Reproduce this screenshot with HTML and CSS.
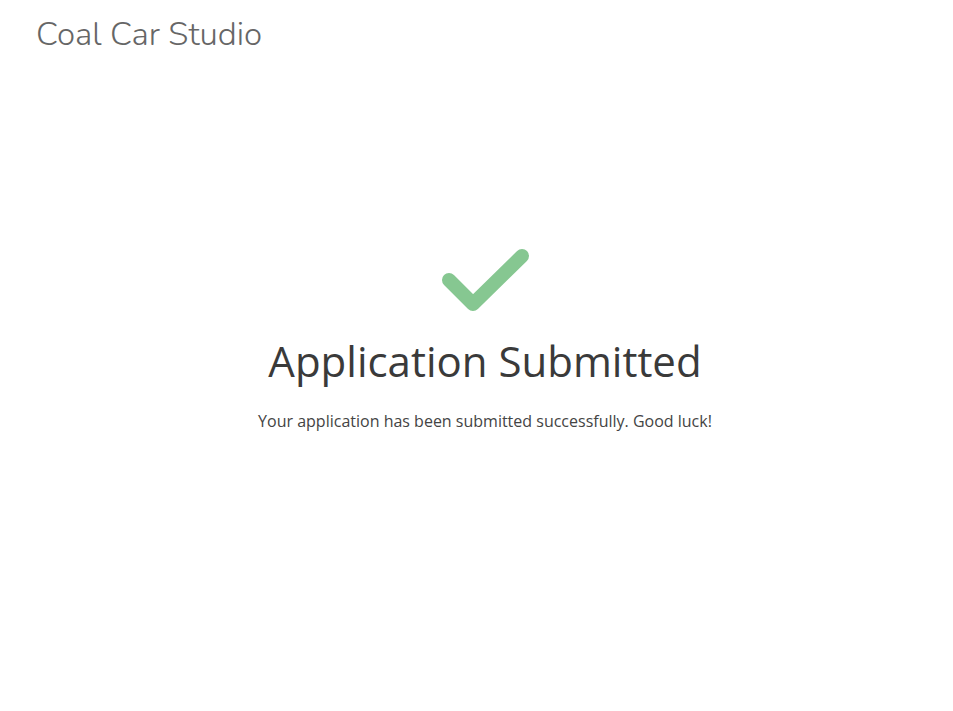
FILE: index.html
```html
<!DOCTYPE html>
<html>
<head>
<meta charset="utf-8">
<link rel="stylesheet" href="styles.css">
</head>
<body>
<header class="topbar">
  <div class="brand">Coal Car Studio</div>
</header>
<main class="content">
  <svg class="check" width="100" height="80" viewBox="0 0 100 80">
    <path d="M14 33 L38 57 L87 9" fill="none" stroke="#86c791" stroke-width="14" stroke-linecap="round" stroke-linejoin="round"/>
  </svg>
  <h1 class="title">Application Submitted</h1>
  <p class="message">Your application has been submitted successfully. Good luck!</p>
</main>
</body>
</html>
```
FILE: styles.css
```css
html, body {
  margin: 0;
  padding: 0;
  background: #ffffff;
}
body {
  font-family: "Open Sans", "Noto Sans", sans-serif;
  color: #3b3b3b;
}
.topbar {
  padding: 15px 36px 0;
  height: 49px;
}
.brand {
  font-family: "Nunito", "Lato", "Open Sans", sans-serif;
  font-weight: 300;
  font-size: 33px;
  color: #666666;
  line-height: 40px;
}
.content {
  display: flex;
  flex-direction: column;
  align-items: center;
  padding-top: 183px;
  padding-left: 17px;
}
.check {
  display: block;
}
.title {
  margin: 9px 0 0;
  font-weight: 400;
  font-size: 42px;
  line-height: 50px;
  color: #3a3a3a;
}
.message {
  margin: 25px 0 0;
  font-size: 16px;
  color: #444444;
  line-height: 20px;
}
```
